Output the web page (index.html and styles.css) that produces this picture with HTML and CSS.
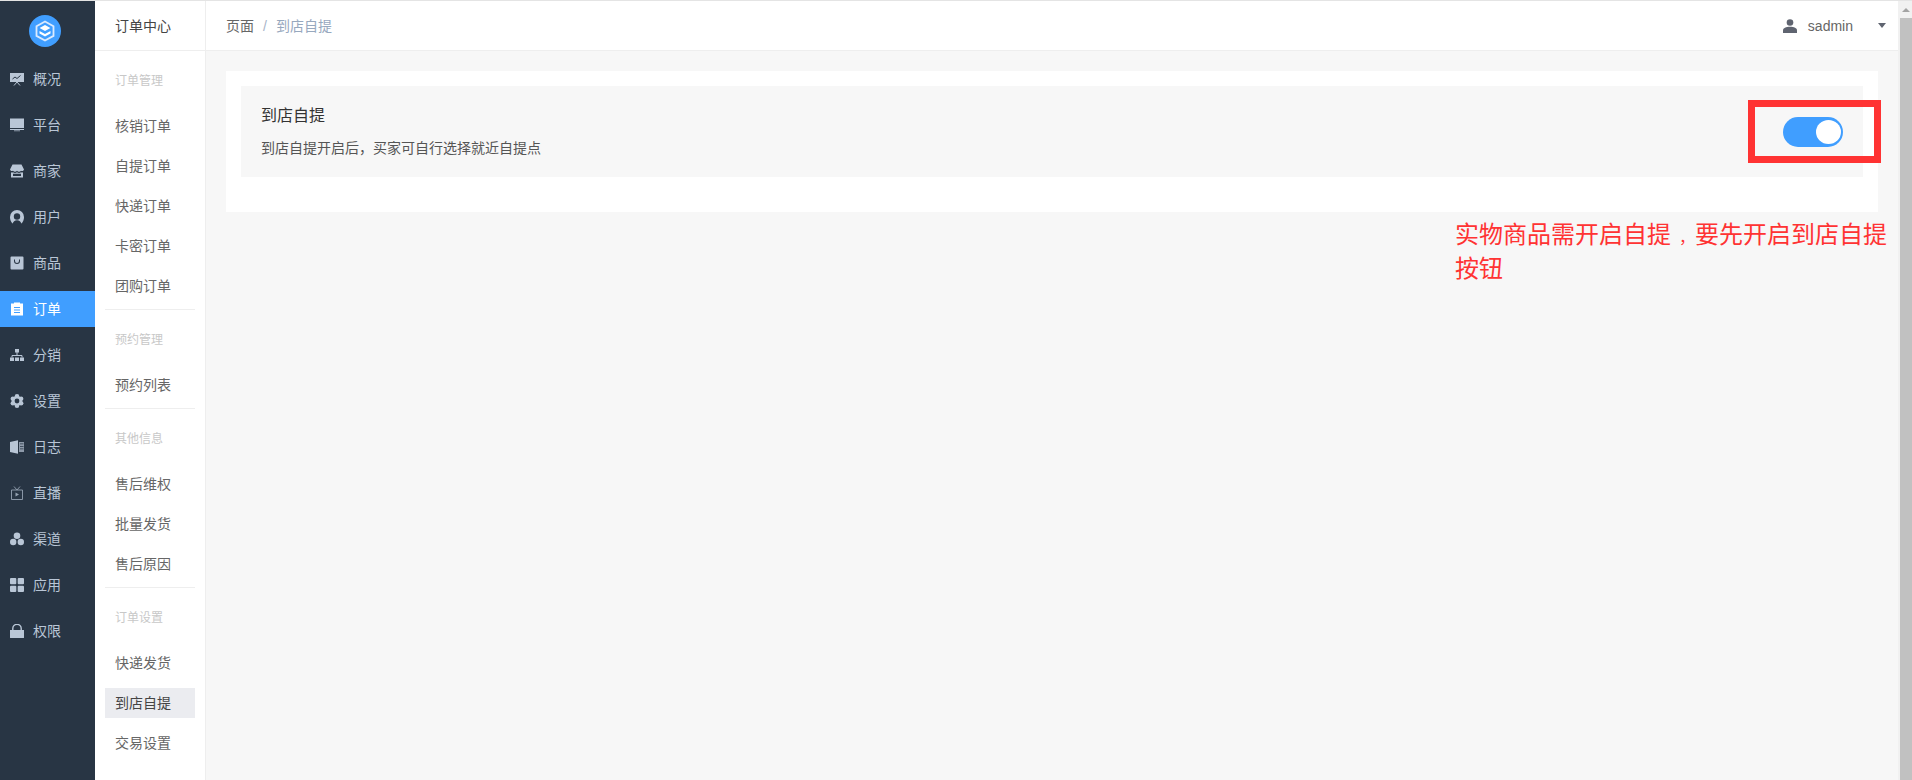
FILE: index.html
```html
<!DOCTYPE html>
<html>
<head>
    <title>到店自提</title>
    <link rel="stylesheet" href="styles.css">
</head>
<body>
    <div class="app">
        <aside class="nav">
            <div class="logo">
                <svg width="32" height="32" viewBox="0 0 32 32">
                    <circle cx="16" cy="16" r="16" fill="#409eff"/>
                    <path d="M16 6.500l8.500 4.800v9.600L16 25.500l-8.500-4.600v-9.600z" fill="none" stroke="#dbeafe" stroke-width="1.800"/>
                    <path d="M16 10l5.400 3L16 16l-5.400-3z" fill="#fff"/>
                    <path d="M10.500 16l5.500 3 5.500-3v2.600L16 21.600l-5.500-3z" fill="#fff"/>
                </svg>
            </div>
            <a class="nav-item">
                <svg viewBox="0 0 14 14"><path d="M0 1h14v9H0z"/><path d="M2.500 7l2.500-2 2 1.500 3.500-3" fill="none" stroke="#283544"/><path d="M4 13.500l3-3.500 3 3.500" fill="none" stroke="#b9c6d6"/></svg>
                <span>概况</span>
            </a>
            <a class="nav-item">
                <svg viewBox="0 0 14 14"><path d="M0 .5h14v9.500H0z"/><path d="M0 11h14v1H0z"/><path d="M4 12.500h6v.7H4z"/></svg>
                <span>平台</span>
            </a>
            <a class="nav-item">
                <svg viewBox="0 0 14 14"><path d="M2.500.5h9L14 5.500a2 2 0 0 1-3 1.300 2.500 2.500 0 0 1-4 0 2.500 2.500 0 0 1-4 0 2 2 0 0 1-3-1.300z"/><path fill-rule="evenodd" d="M1 8.300a3 3 0 0 0 2 0 3.500 3.500 0 0 0 4 0 3.500 3.500 0 0 0 4 0 3 3 0 0 0 2 0V13.500H1zM3 9.800v2.200h8V9.800z"/></svg>
                <span>商家</span>
            </a>
            <a class="nav-item">
                <svg viewBox="0 0 14 14"><path d="M7 0a7 7 0 0 1 7 7c0 2.800-1 5-2.500 6.500h-9C1 12 0 9.800 0 7a7 7 0 0 1 7-7z"/><circle cx="7" cy="6.500" r="3.200" fill="#283544"/><path d="M2.500 14c.5-2.500 2.300-3.800 4.500-3.800s4 1.300 4.500 3.800z" fill="#283544"/></svg>
                <span>用户</span>
            </a>
            <a class="nav-item">
                <svg viewBox="0 0 14 14"><path fill-rule="evenodd" d="M1.500 .5h11a1 1 0 0 1 1 1v11a1 1 0 0 1-1 1h-11a1 1 0 0 1-1-1v-11a1 1 0 0 1 1-1zM4 3.500v1.500a3 3 0 0 0 6 0V3.500H9V5a2 2 0 0 1-4 0V3.500z"/></svg>
                <span>商品</span>
            </a>
            <a class="nav-item active">
                <svg viewBox="0 0 14 14"><path fill-rule="evenodd" d="M1 1.500h3V.5h6v1h3v12H1zM4 5v1h6V5zM4 7.500v1h6v-1zM4 10v1h6v-1z"/></svg>
                <span>订单</span>
            </a>
            <a class="nav-item">
                <svg viewBox="0 0 14 14"><path d="M5 1h4v3.500H5zM0 9.500h4V13H0zM5 9.500h4V13H5zM10 9.500h4V13h-4z"/><path d="M7 4v3.500M2 9.500v-2h10v2" fill="none" stroke="#b9c6d6"/></svg>
                <span>分销</span>
            </a>
            <a class="nav-item">
                <svg viewBox="0 0 14 14">
                    <circle cx="7" cy="7" r="5"/>
                    <circle cx="7" cy="2.300" r="2.300"/><circle cx="7" cy="11.700" r="2.300"/>
                    <circle cx="2.900" cy="4.700" r="2.300"/><circle cx="11.100" cy="4.700" r="2.300"/>
                    <circle cx="2.900" cy="9.300" r="2.300"/><circle cx="11.100" cy="9.300" r="2.300"/>
                    <circle cx="7" cy="7" r="2.400" fill="#283544"/>
                </svg>
                <span>设置</span>
            </a>
            <a class="nav-item">
                <svg viewBox="0 0 14 14"><path d="M0 2L8 .2v13.600L0 12z"/><path fill-rule="evenodd" d="M9 2h5v10H9zM10 3.500v.8h3.500v-.8zM10 6v.8h3.500V6zM10 8.500v.8h3.500v-.8z" opacity=".7"/></svg>
                <span>日志</span>
            </a>
            <a class="nav-item">
                <svg viewBox="0 0 14 14" class="icon-dim"><path d="M1.500 4h11v9.500h-11zM4 .5L7 4l3-3.500" fill="none" stroke="#b9c6d6" stroke-width=".9"/><path d="M5.500 6.500l3.500 2-3.500 2z"/></svg>
                <span>直播</span>
            </a>
            <a class="nav-item">
                <svg viewBox="0 0 14 14"><circle cx="7" cy="3.800" r="3.300"/><circle cx="3.200" cy="10" r="3.200"/><circle cx="10.800" cy="10" r="3.200"/></svg>
                <span>渠道</span>
            </a>
            <a class="nav-item">
                <svg viewBox="0 0 14 14"><rect width="6.300" height="6.300" rx="1"/><rect x="7.700" width="6.300" height="6.300" rx="1"/><rect y="7.700" width="6.300" height="6.300" rx="1"/><rect x="7.700" y="7.700" width="6.300" height="6.300" rx="1"/></svg>
                <span>应用</span>
            </a>
            <a class="nav-item">
                <svg viewBox="0 0 14 14"><path d="M0 6h14v7.500a.5.500 0 0 1-.5.500H.5a.5.500 0 0 1-.5-.5z"/><path d="M2.800 6V4.500a4.200 4.200 0 0 1 8.400 0V6" fill="none" stroke="#b9c6d6" stroke-width="1.400"/></svg>
                <span>权限</span>
            </a>
        </aside>

        <aside class="subnav">
            <div class="subnav-title">订单中心</div>
            <div class="group">
                <div class="group-title">订单管理</div>
                <a class="sub-item">核销订单</a>
                <a class="sub-item">自提订单</a>
                <a class="sub-item">快递订单</a>
                <a class="sub-item">卡密订单</a>
                <a class="sub-item">团购订单</a>
            </div>
            <div class="group">
                <div class="group-title">预约管理</div>
                <a class="sub-item">预约列表</a>
            </div>
            <div class="group">
                <div class="group-title">其他信息</div>
                <a class="sub-item">售后维权</a>
                <a class="sub-item">批量发货</a>
                <a class="sub-item">售后原因</a>
            </div>
            <div class="group">
                <div class="group-title">订单设置</div>
                <a class="sub-item">快递发货</a>
                <a class="sub-item current">到店自提</a>
                <a class="sub-item">交易设置</a>
            </div>
        </aside>

        <div class="main">
            <header class="topbar">
                <div class="crumbs">
                    <span>页面</span>
                    <span class="crumb-sep">/</span>
                    <span class="crumb-now">到店自提</span>
                </div>
                <div class="user">
                    <svg class="user-icon" viewBox="0 0 14 14"><circle cx="7" cy="3.500" r="3.300"/><path d="M0 14v-2.500C0 9 3 7.800 7 7.800s7 1.200 7 3.700V14z"/></svg>
                    <span class="user-name">sadmin</span>
                    <span class="caret"></span>
                </div>
            </header>
            <main class="content">
                <section class="card">
                    <div class="setting">
                        <div>
                            <h4 class="setting-title">到店自提</h4>
                            <p class="setting-desc">到店自提开启后，买家可自行选择就近自提点</p>
                        </div>
                        <span class="switch"><span class="switch-knob"></span></span>
                    </div>
                </section>
            </main>
        </div>

        <div class="scrollbar">
            <span class="scroll-up"></span>
            <div class="scroll-thumb"></div>
        </div>
    </div>

    <div class="mark-box"></div>
    <div class="mark-note">
        <div>实物商品需开启自提<span class="note-comma">，</span>要先开启到店自提</div>
        <div>按钮</div>
    </div>
</body>
</html>
```
FILE: styles.css
```css
* { box-sizing: border-box; }
html, body { margin: 0; height: 100%; overflow: hidden; }
body { font-family: "Liberation Sans", "Noto Sans CJK SC", sans-serif; font-size: 14px; color: #515a6e; background: #f7f7f7; position: relative; }
.app { display: flex; height: 780px; border-top: 1px solid #e4e4e4; }

.nav { width: 95px; flex: none; background: #283544; }
.logo { height: 60px; padding: 14px 5px 0 0; display: flex; justify-content: center; }
.nav-item { display: flex; align-items: center; height: 36px; margin-bottom: 10px; padding-left: 10px; color: #b9c6d6; font-size: 14px; }
.nav-item span { padding-bottom: 2px; }
.nav-item svg { width: 14px; height: 14px; margin-right: 9px; fill: #b9c6d6; }
.nav-item .icon-dim { opacity: .75; }
.nav-item.active { background: #409eff; color: #fff; }
.nav-item.active svg { fill: #fff; }

.subnav { width: 111px; flex: none; background: #fff; border-right: 1px solid #eee; }
.subnav-title { height: 50px; line-height: 50px; padding-left: 20px; color: #444; border-bottom: 1px solid #eee; font-size: 14px; }
.group { margin: 0 10px; border-bottom: 1px solid #eee; padding-bottom: 8px; }
.group:last-child { border-bottom: 0; }
.group-title { height: 60px; line-height: 60px; padding-left: 10px; color: #c8c8c8; font-size: 12px; }
.sub-item { display: block; height: 30px; line-height: 30px; margin-bottom: 10px; padding-left: 10px; color: #666; font-size: 14px; }
.group .sub-item:last-child { margin-bottom: 0; }
.sub-item.current { background: #ebecf0; color: #444; }

.main { flex: 1; min-width: 0; display: flex; flex-direction: column; }
.topbar { height: 50px; flex: none; background: #fff; border-bottom: 1px solid #eee; display: flex; align-items: center; justify-content: space-between; padding: 0 12px 0 20px; }
.crumbs { font-size: 14px; color: #666; display: flex; gap: 9px; padding-bottom: 2px; }
.crumb-sep { color: #a8b4c8; padding-top: 3px; }
.crumb-now { color: #97a8be; }
.user { display: flex; align-items: center; font-size: 14px; color: #666; }
.user-icon { width: 14px; height: 14px; fill: #5f6470; margin-right: 11px; }
.caret { width: 0; height: 0; margin-left: 25px; border: 4px solid transparent; border-top: 5px solid #5f6470; border-bottom: 0; }

.content { flex: 1; padding: 20px 20px 0; }
.card { background: #fff; height: 141px; padding: 15px; }
.setting { background: #f7f7f7; height: 91px; padding: 0 20px; display: flex; align-items: center; justify-content: space-between; }
.setting-title { margin: 0 0 12px; font-size: 16px; font-weight: normal; color: #333; line-height: 20px; }
.setting-desc { margin: 0; font-size: 14px; color: #555; line-height: 20px; }
.switch { width: 60px; height: 30px; border-radius: 15px; background: #409eff; padding: 3px 2px 3px 3px; display: flex; justify-content: flex-end; }
.switch-knob { width: 25px; height: 24px; border-radius: 50%; background: #fff; }

.scrollbar { width: 14px; flex: none; background: #f1f1f1; display: flex; flex-direction: column; padding-left: 2px; }
.scroll-up { height: 17px; flex: none; position: relative; }
.scroll-up::before { content: ""; position: absolute; left: 2px; top: 7px; border: 4px solid transparent; border-bottom: 4px solid #a3a3a3; border-top: 0; }
.scroll-thumb { flex: 1; background: #c1c1c1; }

.mark-box { position: absolute; left: 1748px; top: 100px; width: 133px; height: 63px; border: 7px solid #ff3333; }
.mark-note { position: absolute; left: 1455px; top: 219px; white-space: nowrap; font-size: 24px; line-height: 31px; color: #ff3333; }
.note-comma { font-size: 16px; padding-left: 8px; }
```
